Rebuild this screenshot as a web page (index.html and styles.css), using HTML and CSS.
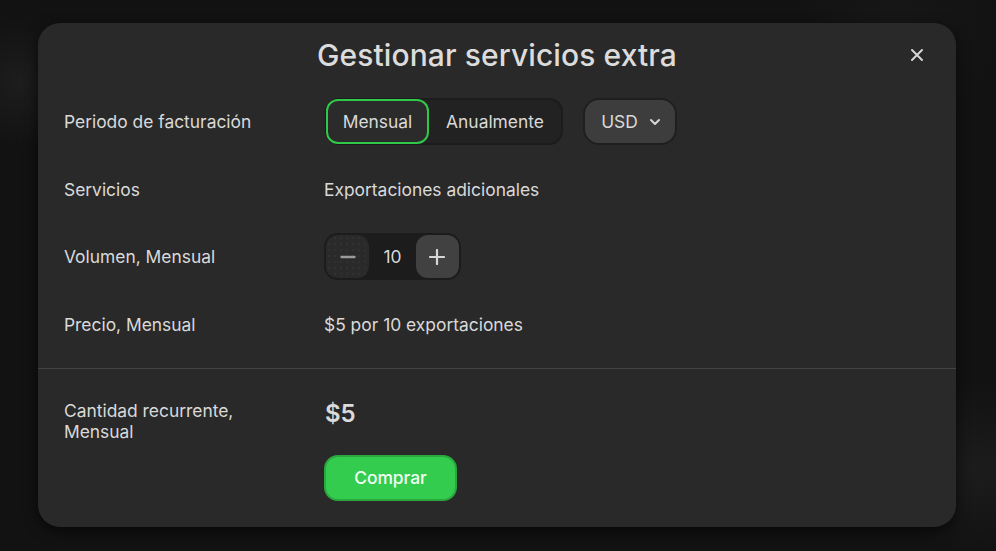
FILE: index.html
```html
<!DOCTYPE html>
<html>

<head>
	<title>Gestionar servicios extra</title>
	<link rel="stylesheet" href="styles.css">
</head>

<body>

	<!--MODAL-->
	<div class="modal">
		<div class="modal-head">
			<h2>Gestionar servicios extra</h2>
			<button class="close" aria-label="Cerrar">
				<svg width="14" height="14" viewBox="0 0 14 14">
					<path d="M2 2L12 12M12 2L2 12" stroke="#d6d6d6" stroke-width="2" stroke-linecap="round" />
				</svg>
			</button>
		</div>

		<div class="rows">
			<div class="row">
				<div class="label">Periodo de facturación</div>
				<div class="value controls">
					<div class="segmented">
						<button class="seg active">Mensual</button>
						<button class="seg">Anualmente</button>
					</div>
					<button class="currency">USD
						<svg width="12" height="8" viewBox="0 0 12 8">
							<path d="M2 2L6 6L10 2" stroke="#d6d6d6" stroke-width="2" fill="none" stroke-linecap="round" stroke-linejoin="round" />
						</svg>
					</button>
				</div>
			</div>
			<div class="row">
				<div class="label">Servicios</div>
				<div class="value">Exportaciones adicionales</div>
			</div>
			<div class="row">
				<div class="label">Volumen, Mensual</div>
				<div class="value">
					<div class="stepper">
						<button class="step minus" disabled>
							<svg width="16" height="16" viewBox="0 0 16 16">
								<path d="M1.5 8H14.5" stroke="#9a9a9a" stroke-width="2.4" stroke-linecap="round" />
							</svg>
						</button>
						<span class="count">10</span>
						<button class="step plus">
							<svg width="16" height="16" viewBox="0 0 16 16">
								<path d="M1 8H15M8 1V15" stroke="#d6d6d6" stroke-width="2.2" stroke-linecap="round" />
							</svg>
						</button>
					</div>
				</div>
			</div>
			<div class="row">
				<div class="label">Precio, Mensual</div>
				<div class="value">$5 por 10 exportaciones</div>
			</div>
		</div>

		<hr>

		<div class="summary">
			<div class="label">Cantidad recurrente,<br>Mensual</div>
			<div class="total">
				<div class="amount">$5</div>
				<button class="buy">Comprar</button>
			</div>
		</div>
	</div>

</body>

</html>
```

FILE: styles.css
```css
body {
	margin: 0;
	height: 100vh;
	box-sizing: border-box;
	padding: 23px 0 0 38px;
	display: flex;
	align-items: flex-start;
	background-color: #121212;
	background-image: radial-gradient(circle at 2% 15%, #1d1d1d 0, transparent 6%),
		radial-gradient(circle at 98% 85%, #1c1c1c 0, transparent 8%),
		radial-gradient(circle at 90% 5%, #171717 0, transparent 10%);
	font-family: Inter, "Noto Sans", sans-serif;
	color: #d9d9d9;
	overflow: hidden;
}

button {
	font-family: inherit;
	color: inherit;
	cursor: pointer;
}

.modal {
	width: 918px;
	height: 504px;
	box-sizing: border-box;
	background-color: #292929;
	border-radius: 22px;
	box-shadow: 0 4px 14px rgba(0, 0, 0, 0.6);
	display: flex;
	flex-direction: column;
}

.modal-head {
	height: 64px;
	display: flex;
	align-items: center;
	justify-content: center;
	position: relative;
}

.modal-head h2 {
	margin: 0;
	font-size: 30px;
	font-weight: 500;
	color: #dcdcdc;
	letter-spacing: 0.1px;
}

.close {
	position: absolute;
	right: 31px;
	top: 24px;
	background: none;
	border: 0;
	padding: 0;
	width: 16px;
	height: 16px;
	display: flex;
	align-items: center;
	justify-content: center;
}

.rows {
	padding: 11px 26px 0;
	display: flex;
	flex-direction: column;
	gap: 20.5px;
}

.row,
.summary {
	display: grid;
	grid-template-columns: 260px 1fr;
	align-items: center;
}

.row {
	height: 47px;
}

.label,
.value {
	font-size: 17.4px;
	line-height: 21px;
}

.controls {
	display: flex;
	gap: 20px;
}

.segmented {
	display: flex;
	width: 238px;
	height: 47px;
	box-sizing: border-box;
	margin-left: 1px;
	border: 2px solid #1c1c1c;
	border-radius: 14px;
	background-color: #222;
}

.seg {
	border: 2px solid transparent;
	border-radius: 12px;
	background: none;
	font-size: 17.4px;
	padding: 0;
	margin: -1px 0;
}

.seg.active {
	width: 103px;
	border-color: #31c84a;
	background-color: #2b2b2b;
	margin-left: -1px;
}

.seg:not(.active) {
	flex: 1;
}

.currency {
	height: 47px;
	width: 94px;
	box-sizing: border-box;
	border: 2px solid #1f1f1f;
	border-radius: 16px;
	background-color: #3d3d3d;
	font-size: 17.4px;
	display: flex;
	align-items: center;
	justify-content: center;
	gap: 11px;
	padding: 0 0 0 2px;
}

.stepper {
	width: 137px;
	height: 47px;
	box-sizing: border-box;
	padding: 2px;
	border-radius: 14px;
	background-color: #1c1c1c;
	display: flex;
	align-items: center;
	justify-content: space-between;
}

.step {
	width: 43px;
	height: 43px;
	border: 0;
	border-radius: 12px;
	display: flex;
	align-items: center;
	justify-content: center;
	padding: 0;
}

.minus {
	background-color: #2a2a2a;
	background-image: radial-gradient(#383838 0.6px, transparent 0.8px);
	background-size: 6px 6px;
	cursor: default;
}

.plus {
	background-color: #414141;
}

.count {
	font-size: 17.4px;
}

hr {
	margin: 20px 0 0;
	border: 0;
	height: 1px;
	background-color: #434343;
}

.summary {
	padding: 31px 26px 0;
	align-items: start;
}

.total {
	display: flex;
	flex-direction: column;
	align-items: flex-start;
	gap: 27px;
}

.amount {
	font-size: 24px;
	font-weight: 600;
	line-height: 28px;
	margin-left: 1px;
	color: #dadada;
}

.buy {
	width: 133px;
	height: 46px;
	border: 2px solid #2aa83e;
	border-radius: 14px;
	background-color: #33cc4f;
	color: #f4fff4;
	font-size: 17.4px;
	font-weight: 500;
}
```
